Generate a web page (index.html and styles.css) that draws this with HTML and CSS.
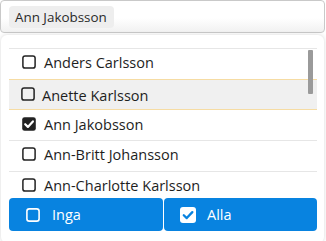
FILE: index.html
```html
<!DOCTYPE html>
<html lang="sv">
<head>
<meta charset="utf-8">
<link rel="stylesheet" href="styles.css">
</head>
<body>
<div class="select">
  <span class="tag">Ann Jakobsson</span>
</div>
<div class="panel">
  <div class="list">
    <ul class="rows">
      <li class="row"><svg class="cb" viewBox="0 0 14 14"><rect x="0.9" y="0.9" width="12.2" height="12.2" rx="2.2" fill="none" stroke="#222" stroke-width="1.5"/></svg><span>Anders Carlsson</span></li>
      <li class="row hover"><svg class="cb" viewBox="0 0 14 14"><rect x="0.9" y="0.9" width="12.2" height="12.2" rx="2.2" fill="none" stroke="#222" stroke-width="1.5"/></svg><span>Anette Karlsson</span></li>
      <li class="row"><svg class="cb" viewBox="0 0 14 14"><rect x="0.2" y="0.2" width="13.6" height="13.6" rx="2.4" fill="#222"/><path d="M3.2 7.2 L5.9 9.9 L10.9 4.4" fill="none" stroke="#fff" stroke-width="2.2" stroke-linecap="round" stroke-linejoin="round"/></svg><span>Ann Jakobsson</span></li>
      <li class="row"><svg class="cb" viewBox="0 0 14 14"><rect x="0.9" y="0.9" width="12.2" height="12.2" rx="2.2" fill="none" stroke="#222" stroke-width="1.5"/></svg><span>Ann-Britt Johansson</span></li>
      <li class="row"><svg class="cb" viewBox="0 0 14 14"><rect x="0.9" y="0.9" width="12.2" height="12.2" rx="2.2" fill="none" stroke="#222" stroke-width="1.5"/></svg><span>Ann-Charlotte Karlsson</span></li>
      <li class="row"><svg class="cb" viewBox="0 0 14 14"><rect x="0.9" y="0.9" width="12.2" height="12.2" rx="2.2" fill="none" stroke="#222" stroke-width="1.5"/></svg><span>Anna Lindqvist</span></li>
    </ul>
    <div class="thumb"></div>
  </div>
  <div class="actions">
    <div class="btn" role="button"><svg class="cb" viewBox="0 0 14 14"><rect x="0.9" y="0.9" width="12.2" height="12.2" rx="2.4" fill="none" stroke="#fff" stroke-width="1.6"/></svg><span class="lbl">Inga</span></div>
    <div class="btn" role="button"><svg class="cb" viewBox="0 0 14 14"><rect x="0" y="0" width="14" height="14" rx="2.6" fill="#fff"/><path d="M3.3 7.2 L5.9 9.7 L10.8 4.5" fill="none" stroke="#0883e0" stroke-width="2" stroke-linecap="round" stroke-linejoin="round"/></svg><span class="lbl">Alla</span></div>
  </div>
</div>
</body>
</html>
```
FILE: styles.css
```css
* { box-sizing: border-box; }
html, body { margin: 0; padding: 0; background: #fff; }
body {
  font-family: "Open Sans", "Noto Sans", sans-serif;
  color: #1e1e1e;
  width: 326px;
  height: 241px;
  overflow: hidden;
}
.select {
  height: 33px;
  margin: 0 1px 0 0;
  border: 1px solid #c9c9c9;
  border-radius: 4px;
  background: linear-gradient(to bottom, #fff 55%, #f1f1f1 100%);
  padding: 5px 8px;
  display: flex;
  align-items: flex-start;
}
.tag {
  display: inline-flex;
  align-items: center;
  height: 22px;
  padding: 0 7px 0 6px;
  background: #eeeeee;
  border-radius: 4px;
  font-size: 13.4px;
  color: #2a2a2a;
}
.panel {
  margin: 2px 2px 0 1px;
  padding: 13px 7px 9px 8px;
  background: #fff;
  border-radius: 6px;
  box-shadow: 0 0 4px rgba(0, 0, 0, 0.16);
  height: 208px;
}
.list {
  position: relative;
  height: 150px;
  overflow: hidden;
  border-top: 1px solid #e6e6e6;
}
.rows { list-style: none; margin: 0; padding: 0; }
.row {
  display: flex;
  align-items: center;
  height: 30.7px;
  padding-left: 13px;
  padding-bottom: 2px;
  border-top: 1px solid #e6e6e6;
  font-size: 14.5px;
}
.row:first-child { border-top: none; height: 29.7px; }
.row .cb { width: 14px; height: 14px; margin-right: 8px; margin-top: -1px; flex: none; }
.row.hover { background: #f0f0f0; border-top-color: #f6dca3; padding-left: 12px; }
.row.hover + .row { border-top-color: #f6dca3; }
.row.hover .cb { margin-top: 1px; }
.row.hover span { padding-top: 3px; margin-left: -1px; }
.thumb {
  position: absolute;
  top: 1px;
  left: 299px;
  width: 5px;
  height: 44px;
  background: #9a9a9a;
  border-radius: 1px;
}
.actions {
  display: flex;
  height: 33px;
}
.btn {
  flex: 1;
  display: flex;
  align-items: center;
  background: #0883e0;
  color: #fff;
  border-radius: 4px;
  font-size: 14.5px;
  font-weight: 500;
  line-height: 20px;
  padding: 0 0 0 17px;
}
.btn + .btn { margin-left: 1px; padding-left: 16px; }
.btn .cb { width: 14px; height: 14px; margin-right: 12px; flex: none; }
.btn + .btn .cb { width: 16px; height: 16px; margin-right: 11px; }
.lbl { white-space: nowrap; }
```
